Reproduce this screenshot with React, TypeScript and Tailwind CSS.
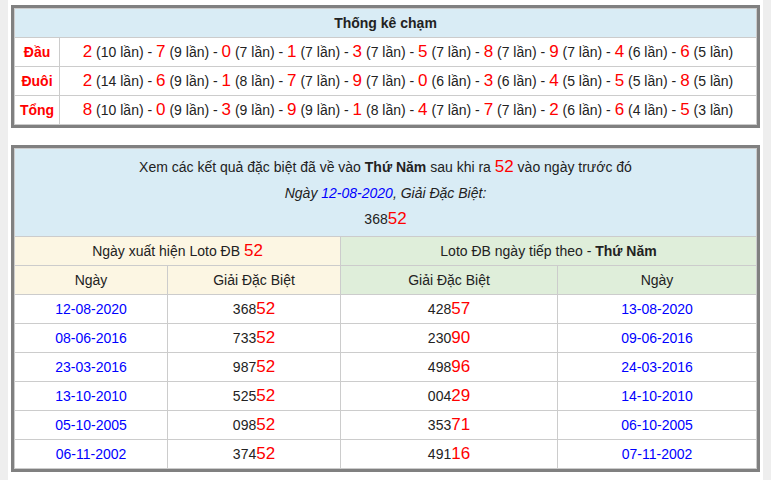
const dau = [['2','10'],['7','9'],['0','7'],['1','7'],['3','7'],['5','7'],['8','7'],['9','7'],['4','6'],['6','5']]
const duoi = [['2','14'],['6','9'],['1','8'],['7','7'],['9','7'],['0','6'],['3','6'],['4','5'],['5','5'],['8','5']]
const tong = [['8','10'],['0','9'],['3','9'],['9','9'],['1','8'],['4','7'],['7','7'],['2','6'],['6','4'],['5','3']]

const rows = [
  ['12-08-2020','368','52','428','57','13-08-2020'],
  ['08-06-2016','733','52','230','90','09-06-2016'],
  ['23-03-2016','987','52','498','96','24-03-2016'],
  ['13-10-2010','525','52','004','29','14-10-2010'],
  ['05-10-2005','098','52','353','71','06-10-2005'],
  ['06-11-2002','374','52','491','16','07-11-2002'],
]

function Stat({ items }: { items: string[][] }) {
  return (
    <>
      {items.map(([n, c], i) => (
        <span key={i}>
          {i > 0 && ' - '}
          <span className="text-[17px] text-[#ff0000]">{n}</span> ({c} lần)
        </span>
      ))}
    </>
  )
}

export default function App() {
  const cell = 'border border-[#cccccc]'
  return (
    <div className="min-h-[480px] bg-[#eeeeee] px-[8px] text-[14px] text-[#222]" style={{ fontFamily: 'Arial, "Liberation Sans", sans-serif' }}>
      <div className="min-h-[480px] bg-white px-[3px] pt-[5px]">
        <div className="border-[3px] border-[#808080]">
          <table className="w-full border-collapse">
            <tbody>
              <tr className="h-[29px] bg-[#d9ecf5]">
                <td colSpan={2} className={`${cell} text-center font-bold`}>Thống kê chạm</td>
              </tr>
              {[['Đầu', dau], ['Đuôi', duoi], ['Tổng', tong]].map(([label, items]) => (
                <tr key={label as string} className="h-[29px]">
                  <td className={`${cell} w-[45px] text-center font-bold text-[#ff0000]`}>{label as string}</td>
                  <td className={`${cell} text-center`}><Stat items={items as string[][]} /></td>
                </tr>
              ))}
            </tbody>
          </table>
        </div>

        <div className="mt-[17px] border-[3px] border-[#808080]">
          <table className="w-full border-collapse text-center">
            <tbody>
              <tr className="bg-[#d9ecf5]">
                <td colSpan={4} className={`${cell} h-[88px] leading-[26px]`}>
                  <div>Xem các kết quả đặc biệt đã về vào <b>Thứ Năm</b> sau khi ra <span className="text-[17px] text-[#ff0000]">52</span> vào ngày trước đó</div>
                  <div className="italic">Ngày <span className="text-[#0000ff]">12-08-2020</span>, Giải Đặc Biệt:</div>
                  <div>368<span className="text-[17px] text-[#ff0000]">52</span></div>
                </td>
              </tr>
              <tr className="h-[29px]">
                <td colSpan={2} className={`${cell} bg-[#fcf6e3]`}>Ngày xuất hiện Loto ĐB <span className="text-[17px] text-[#ff0000]">52</span></td>
                <td colSpan={2} className={`${cell} bg-[#dfeeda]`}>Loto ĐB ngày tiếp theo - <b>Thứ Năm</b></td>
              </tr>
              <tr className="h-[29px]">
                <td className={`${cell} w-[153px] bg-[#fcf6e3]`}>Ngày</td>
                <td className={`${cell} w-[173px] bg-[#fcf6e3]`}>Giải Đặc Biệt</td>
                <td className={`${cell} w-[217px] bg-[#dfeeda]`}>Giải Đặc Biệt</td>
                <td className={`${cell} bg-[#dfeeda]`}>Ngày</td>
              </tr>
              {rows.map(r => (
                <tr key={r[0]} className="h-[29px]">
                  <td className={`${cell} text-[#0000ff]`}>{r[0]}</td>
                  <td className={cell}>{r[1]}<span className="text-[17px] text-[#ff0000]">{r[2]}</span></td>
                  <td className={cell}>{r[3]}<span className="text-[17px] text-[#ff0000]">{r[4]}</span></td>
                  <td className={`${cell} text-[#0000ff]`}>{r[5]}</td>
                </tr>
              ))}
            </tbody>
          </table>
        </div>
      </div>
    </div>
  )
}
